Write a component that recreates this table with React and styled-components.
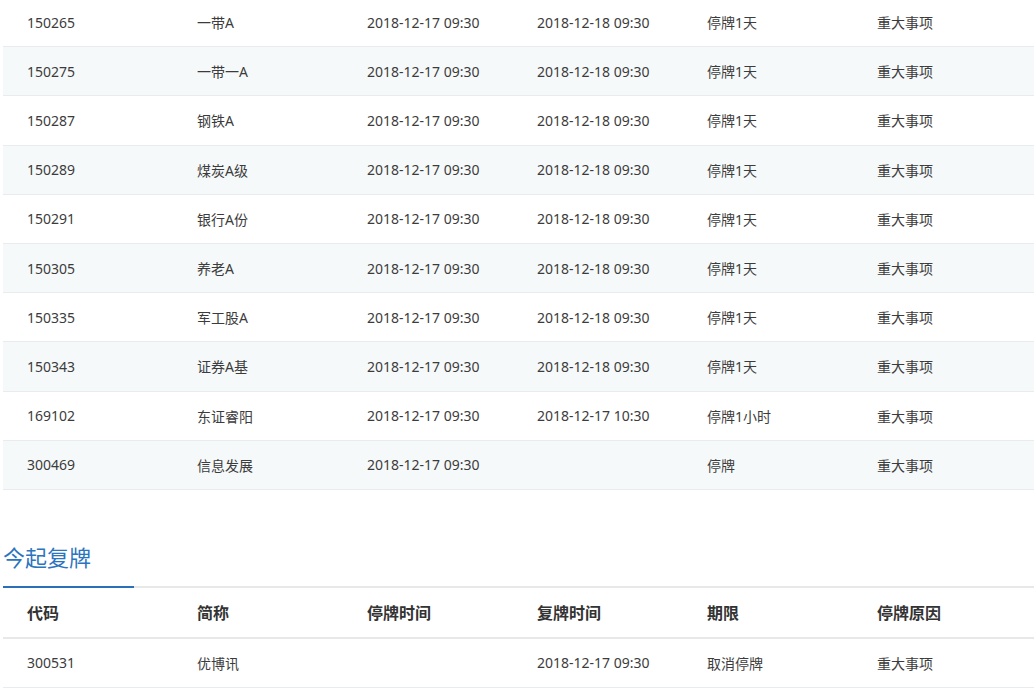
import React from 'react'
import styled, { createGlobalStyle } from 'styled-components'

const suspended = [
  ['150265', '一带A', '2018-12-17 09:30', '2018-12-18 09:30', '停牌1天', '重大事项'],
  ['150275', '一带一A', '2018-12-17 09:30', '2018-12-18 09:30', '停牌1天', '重大事项'],
  ['150287', '钢铁A', '2018-12-17 09:30', '2018-12-18 09:30', '停牌1天', '重大事项'],
  ['150289', '煤炭A级', '2018-12-17 09:30', '2018-12-18 09:30', '停牌1天', '重大事项'],
  ['150291', '银行A份', '2018-12-17 09:30', '2018-12-18 09:30', '停牌1天', '重大事项'],
  ['150305', '养老A', '2018-12-17 09:30', '2018-12-18 09:30', '停牌1天', '重大事项'],
  ['150335', '军工股A', '2018-12-17 09:30', '2018-12-18 09:30', '停牌1天', '重大事项'],
  ['150343', '证券A基', '2018-12-17 09:30', '2018-12-18 09:30', '停牌1天', '重大事项'],
  ['169102', '东证睿阳', '2018-12-17 09:30', '2018-12-17 10:30', '停牌1小时', '重大事项'],
  ['300469', '信息发展', '2018-12-17 09:30', '', '停牌', '重大事项'],
]

const resumed = [
  ['300531', '优博讯', '', '2018-12-17 09:30', '取消停牌', '重大事项'],
]

const headers = ['代码', '简称', '停牌时间', '复牌时间', '期限', '停牌原因']

const GlobalStyle = createGlobalStyle`
  body {
    margin: 0;
    padding: 0 0 0 3px;
    background: #fff;
    font-family: "Noto Sans", "Noto Sans CJK SC", sans-serif;
    overflow: hidden;
  }
`

const Page = styled.div`
  display: flex;
  flex-direction: column;
  margin-top: -2px;
`

const Table = styled.div`
  display: flex;
  flex-direction: column;
`

const Row = styled.div`
  display: grid;
  grid-template-columns: repeat(5, 170px) 1fr;
  align-items: center;
  height: 49.2px;
  box-sizing: border-box;
  border-bottom: 1px solid #e9ecee;
  background: ${p => (p.$striped ? '#f6f9fa' : '#fff')};
`

const HeadRow = styled(Row)`
  height: 51px;
  border-bottom: 2px solid #e8e8e8;
`

const Cell = styled.div`
  padding-left: 24px;
  font-size: 14px;
  color: #3c3c3c;
  white-space: nowrap;
`

const HeadCell = styled(Cell)`
  font-size: 16px;
  font-weight: 700;
  color: #333;
`

const TabBar = styled.div`
  display: flex;
  margin-top: 52px;
  border-bottom: 2px solid #e8e8e8;
`

const Tab = styled.div`
  width: 131px;
  font-size: 22px;
  line-height: 30px;
  padding-bottom: 14px;
  margin-bottom: -2px;
  color: #2b74be;
  border-bottom: 2px solid #2b6fb6;
`

function App() {
  return (
    <Page>
      <GlobalStyle />
      <Table>
        {suspended.map((r, i) => (
          <Row key={r[0]} $striped={i % 2 === 1}>
            {r.map((c, j) => <Cell key={j}>{c}</Cell>)}
          </Row>
        ))}
      </Table>

      <TabBar>
        <Tab>今起复牌</Tab>
      </TabBar>

      <Table>
        <HeadRow>
          {headers.map(h => <HeadCell key={h}>{h}</HeadCell>)}
        </HeadRow>
        {resumed.map(r => (
          <Row key={r[0]}>
            {r.map((c, j) => <Cell key={j}>{c}</Cell>)}
          </Row>
        ))}
      </Table>
    </Page>
  )
}

export default App
